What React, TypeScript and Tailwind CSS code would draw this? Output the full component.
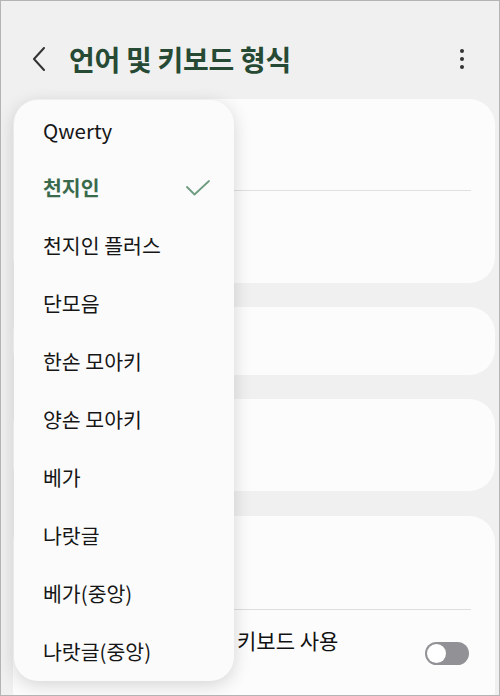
import React from 'react'

const items = [
  'Qwerty',
  '천지인',
  '천지인 플러스',
  '단모음',
  '한손 모아키',
  '양손 모아키',
  '베가',
  '나랏글',
  '베가(중앙)',
  '나랏글(중앙)',
]

const font = { fontFamily: '"Noto Sans CJK KR", "Noto Sans", sans-serif' }

function Card({ children, className = '' }: { children?: React.ReactNode; className?: string }) {
  return <div className={`ml-3 mr-1 rounded-[26px] bg-[#fcfcfc] ${className}`}>{children}</div>
}

export default function App() {
  const selected = '천지인'

  return (
    <div
      className="relative w-[500px] h-[696px] overflow-hidden border border-[#b4b4b4] bg-[#f0f0f0] box-border"
      style={font}
    >
      {/* header */}
      <div className="flex items-center h-[98px] pt-[18px] pl-[30px] pr-[30px]">
        <svg width="16" height="24" viewBox="0 0 16 24" className="shrink-0">
          <path d="M13 1 L3 12 L13 23" fill="none" stroke="#333" strokeWidth="2" strokeLinecap="round" strokeLinejoin="round" />
        </svg>
        <h1 className="ml-[22px] text-[28px] font-bold text-[#264a33] tracking-[-0.3px]">언어 및 키보드 형식</h1>
        <div className="ml-auto flex flex-col items-center gap-[4px] pr-[5px]">
          <span className="w-[4px] h-[4px] rounded-full bg-[#333]" />
          <span className="w-[4px] h-[4px] rounded-full bg-[#333]" />
          <span className="w-[4px] h-[4px] rounded-full bg-[#333]" />
        </div>
      </div>

      {/* cards */}
      <div className="flex flex-col">
        <Card className="h-[184px] flex flex-col justify-center">
          <div className="mx-6 h-px bg-[#e0e0e0] mt-[-1px]" />
        </Card>
        <Card className="h-[68px] mt-[24px]" />
        <Card className="h-[92px] mt-[24px]" />
        <Card className="h-[200px] mt-[25px] flex flex-col">
          <div className="h-[93px]" />
          <div className="mx-6 h-px bg-[#dedede]" />
          <div className="flex items-start pl-[224px] pr-[26px] pt-[15px]">
            <span className="text-[21px] leading-[30px] text-[#111]">키보드 사용</span>
            <div className="ml-auto mt-[17px] w-[44px] h-[23px] rounded-full bg-[#929296] flex items-center px-[2px]">
              <span className="w-[19px] h-[19px] rounded-full bg-white" />
            </div>
          </div>
        </Card>
      </div>

      {/* dropdown */}
      <div className="absolute left-[13px] top-[99px] w-[220px] h-[581px] rounded-[24px] bg-[#fbfbfc] shadow-[0_4px_18px_rgba(0,0,0,0.16)] flex flex-col py-[1px]">
        {items.map((item) => {
          const isSel = item === selected
          return (
            <div key={item} className="flex-1 flex items-center pl-[29px] pr-[24px]">
              <span
                className={
                  isSel
                    ? 'text-[20.5px] font-bold text-[#3a6a4c]'
                    : 'text-[20.5px] text-[#161616]'
                }
              >
                {item}
              </span>
              {isSel && (
                <svg width="24" height="16" viewBox="0 0 24 16" className="ml-auto">
                  <path d="M1 7 L8.5 14.5 L23 1" fill="none" stroke="#6f9c80" strokeWidth="1.8" strokeLinecap="round" strokeLinejoin="round" />
                </svg>
              )}
            </div>
          )
        })}
      </div>
    </div>
  )
}
